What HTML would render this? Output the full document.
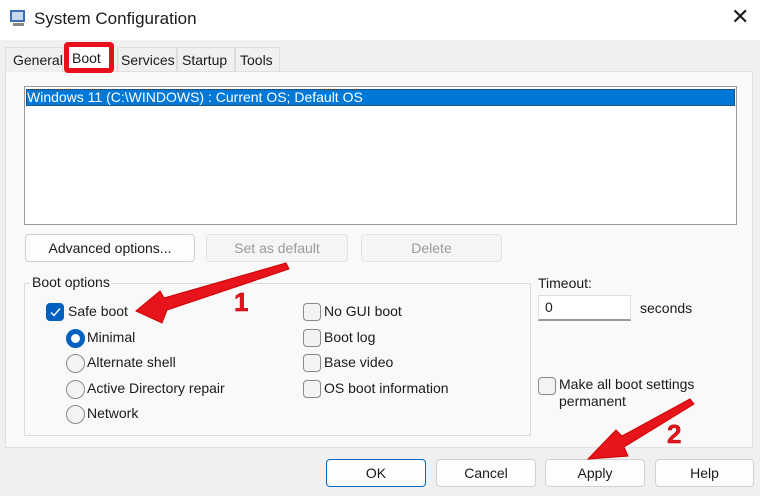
<!DOCTYPE html>
<html><head><style>
*{box-sizing:border-box;margin:0;padding:0}
body{width:760px;height:496px;background:#f0f0f0;font-family:"Liberation Sans",sans-serif;font-size:14px;color:#1a1a1a;position:relative;overflow:hidden}
.a{position:absolute}
.btn{position:absolute;background:#fdfdfd;border:1px solid #d0d0d0;border-radius:4px;text-align:center;line-height:26px;font-size:14px}
.dis{color:#9a9a9a;background:#f5f5f5;border-color:#e2e2e2}
.cb{position:absolute;width:18px;height:18px;border:1px solid #8a8a8a;border-radius:4px;background:#f3f3f3}
.rb{position:absolute;width:19px;height:19px;border:1px solid #8a8a8a;border-radius:50%;background:#f3f3f3}
.t{position:absolute;white-space:nowrap}
</style></head><body>
<div class="a" style="left:0;top:0;width:760px;height:40px;background:#fff"></div>
<svg class="a" style="left:8px;top:8px" width="20" height="20"><rect x="2" y="2" width="15" height="12" fill="#3a6fb5"/><rect x="4" y="4" width="11" height="8" fill="#c6d8ee"/><rect x="5" y="15" width="11" height="3" fill="#888"/></svg>
<div class="t" style="left:34px;top:9px;font-size:17px">System Configuration</div>
<div class="t" style="left:731px;top:4px;font-size:22px;font-weight:300">✕</div>
<div class="a" style="left:5px;top:71px;width:748px;height:377px;background:#f9f9f9;border:1px solid #e0e0e0"></div>
<div class="a" style="left:5px;top:47px;width:58px;height:25px;background:#f0f0f0;border:1px solid #ddd;border-bottom:0"></div>
<div class="a" style="left:117px;top:47px;width:60px;height:25px;border:1px solid #ddd;border-bottom:0"></div>
<div class="a" style="left:177px;top:47px;width:58px;height:25px;border:1px solid #ddd;border-bottom:0"></div>
<div class="a" style="left:235px;top:47px;width:45px;height:25px;border:1px solid #ddd;border-bottom:0"></div>
<div class="t" style="left:13px;top:52px">General</div>
<div class="a" style="left:64px;top:42px;width:50px;height:31px;border:5px solid #e8101a;border-radius:4px;background:#fff"></div>
<div class="t" style="left:72px;top:50px">Boot</div>
<div class="t" style="left:121px;top:52px">Services</div>
<div class="t" style="left:182px;top:52px">Startup</div>
<div class="t" style="left:240px;top:52px">Tools</div>
<div class="a" style="left:24px;top:86px;width:713px;height:139px;background:#fff;border:1px solid #9a9a9a"></div>
<div class="a" style="left:26px;top:89px;width:709px;height:17px;background:#0078d7;border:1px dotted #333"></div>
<div class="t" style="left:27px;top:89px;color:#fff;font-size:14px">Windows 11 (C:\WINDOWS) : Current OS; Default OS</div>
<div class="btn" style="left:25px;top:234px;width:170px;height:28px">Advanced options...</div>
<div class="btn dis" style="left:206px;top:234px;width:142px;height:28px">Set as default</div>
<div class="btn dis" style="left:361px;top:234px;width:141px;height:28px">Delete</div>
<div class="a" style="left:24px;top:283px;width:507px;height:153px;border:1px solid #dcdcdc"></div>
<div class="t" style="left:30px;top:274px;background:#f9f9f9;padding:0 2px">Boot options</div>
<div class="cb" style="left:46px;top:303px;background:#0060c0;border-color:#0060c0"><svg width="16" height="16" style="position:absolute;left:0;top:0"><path d="M4 8.5l3 3 6-7" stroke="#fff" stroke-width="1.4" fill="none"/></svg></div>
<div class="t" style="left:68px;top:303px">Safe boot</div>
<div class="rb" style="left:66px;top:329px;background:#fff;border:5px solid #0060c0"></div>
<div class="t" style="left:87px;top:329px">Minimal</div>
<div class="rb" style="left:66px;top:354px"></div><div class="t" style="left:87px;top:354px">Alternate shell</div>
<div class="rb" style="left:66px;top:380px"></div><div class="t" style="left:87px;top:380px">Active Directory repair</div>
<div class="rb" style="left:66px;top:405px"></div><div class="t" style="left:87px;top:405px">Network</div>
<div class="cb" style="left:303px;top:303px"></div><div class="t" style="left:324px;top:303px">No GUI boot</div>
<div class="cb" style="left:303px;top:329px"></div><div class="t" style="left:324px;top:329px">Boot log</div>
<div class="cb" style="left:303px;top:354px"></div><div class="t" style="left:324px;top:354px">Base video</div>
<div class="cb" style="left:303px;top:380px"></div><div class="t" style="left:324px;top:380px">OS boot information</div>
<div class="t" style="left:538px;top:275px">Timeout:</div>
<div class="a" style="left:538px;top:295px;width:93px;height:26px;background:#fff;border:1px solid #e0e0e0;border-bottom:2px solid #999"></div>
<div class="t" style="left:545px;top:299px">0</div>
<div class="t" style="left:640px;top:300px">seconds</div>
<div class="cb" style="left:538px;top:377px"></div>
<div class="t" style="left:559px;top:376px;line-height:17px">Make all boot settings<br>permanent</div>
<div class="btn" style="left:326px;top:459px;width:100px;height:28px;border-color:#0067c0">OK</div>
<div class="btn" style="left:436px;top:459px;width:100px;height:28px">Cancel</div>
<div class="btn" style="left:545px;top:459px;width:100px;height:28px">Apply</div>
<div class="btn" style="left:655px;top:459px;width:99px;height:28px">Help</div>
<svg class="a" style="left:0;top:0" width="760" height="496">
<path d="M286 263 L164 298 L160 291 L136 311 L162 323 L167 310 L289 269 Z" fill="#e8141c" stroke="#c00" stroke-width="1"/>
<path d="M690 399 L622 436 L616 430 L588 459 L628 456 L624 447 L694 404 Z" fill="#e8141c" stroke="#c00" stroke-width="1"/>
<text x="234" y="311" font-family="Liberation Sans" font-weight="bold" font-size="26" fill="#e8141c" stroke="#a00" stroke-width="0.5">1</text>
<text x="667" y="443" font-family="Liberation Sans" font-weight="bold" font-size="26" fill="#e8141c" stroke="#a00" stroke-width="0.5">2</text>
</svg>
</body></html>
